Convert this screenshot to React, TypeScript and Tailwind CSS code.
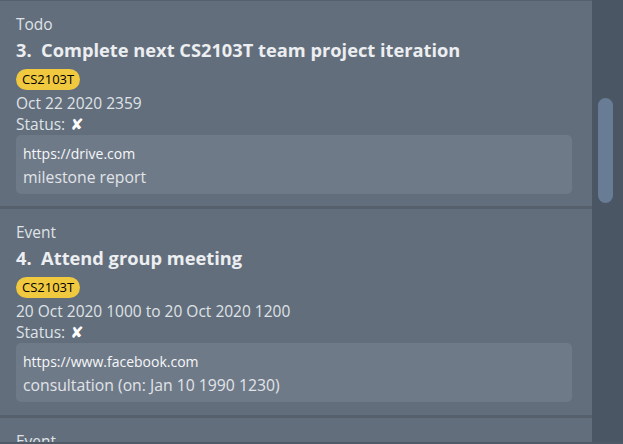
import React from "react";

type Item = {
  kind: string;
  title: string;
  tag: string;
  date: string;
  url: string;
  desc: string;
};

const items: Item[] = [
  {
    kind: "Todo",
    title: "3.  Complete next CS2103T team project iteration",
    tag: "CS2103T",
    date: "Oct 22 2020 2359",
    url: "https://drive.com",
    desc: "milestone report",
  },
  {
    kind: "Event",
    title: "4.  Attend group meeting",
    tag: "CS2103T",
    date: "20 Oct 2020 1000 to 20 Oct 2020 1200",
    url: "https://www.facebook.com",
    desc: "consultation (on: Jan 10 1990 1230)",
  },
  {
    kind: "Event",
    title: "5.  Attend lecture",
    tag: "CS2103T",
    date: "21 Oct 2020 1000 to 21 Oct 2020 1200",
    url: "https://www.zoom.com",
    desc: "lecture",
  },
];

function Card({ item, first }: { item: Item; first: boolean }) {
  return (
    <div
      className={
        first
          ? "h-[206px] shrink-0 bg-[#636e7c] pl-4 pr-5 pt-[13px] flex flex-col border-t border-[#56606d]"
          : "h-[206px] shrink-0 bg-[#636e7c] pl-4 pr-5 pt-[13px] flex flex-col"
      }
    >
      <div className="text-[15.5px] leading-[21px] text-[#dfe3e7]">{item.kind}</div>
      <div className="text-[18.25px] leading-[26px] font-bold text-[#eceef1] mt-[2px] whitespace-pre">
        {item.title}
      </div>
      <div className="flex mt-[6px]">
        <span className="h-[21px] px-[6px] rounded-full bg-[#f0c93f] text-black text-[13px] leading-[21px]">
          {item.tag}
        </span>
      </div>
      <div className="text-[15.5px] leading-[21px] text-[#dfe3e7] mt-[3px]">{item.date}</div>
      <div className="text-[15.5px] leading-[21px] text-[#dfe3e7] flex items-center gap-[5px]">
        <span>Status:</span>
        <span
          className="text-white text-[16px] leading-[21px] font-bold"
          style={{ fontFamily: "'DejaVu Sans', sans-serif" }}
        >
          ✘
        </span>
      </div>
      <div className="rounded-[5px] bg-[#6f7a88] pl-[7px] pt-[8px] pb-[5px]">
        <div className="text-[14px] leading-[21px] text-[#f6f7f8]">{item.url}</div>
        <div className="text-[15.75px] leading-[24px] text-[#e1e4e8] mt-[1px]">{item.desc}</div>
      </div>
    </div>
  );
}

export default function App() {
  return (
    <div
      className="w-[623px] h-[444px] overflow-hidden flex bg-[#4a5664] border-b-2 border-[#505a67]"
      style={{ fontFamily: "'Open Sans', 'Noto Sans', sans-serif" }}
    >
      <div className="w-[592px] shrink-0 flex flex-col gap-[3px] bg-[#56606d] overflow-hidden">
        {items.map((it, i) => (
          <Card key={i} item={it} first={i === 0} />
        ))}
      </div>
      <div className="flex-1 pt-[98px] pl-[6px]">
        <div className="w-[15px] h-[105px] rounded-full bg-[#697c95]" />
      </div>
    </div>
  );
}
